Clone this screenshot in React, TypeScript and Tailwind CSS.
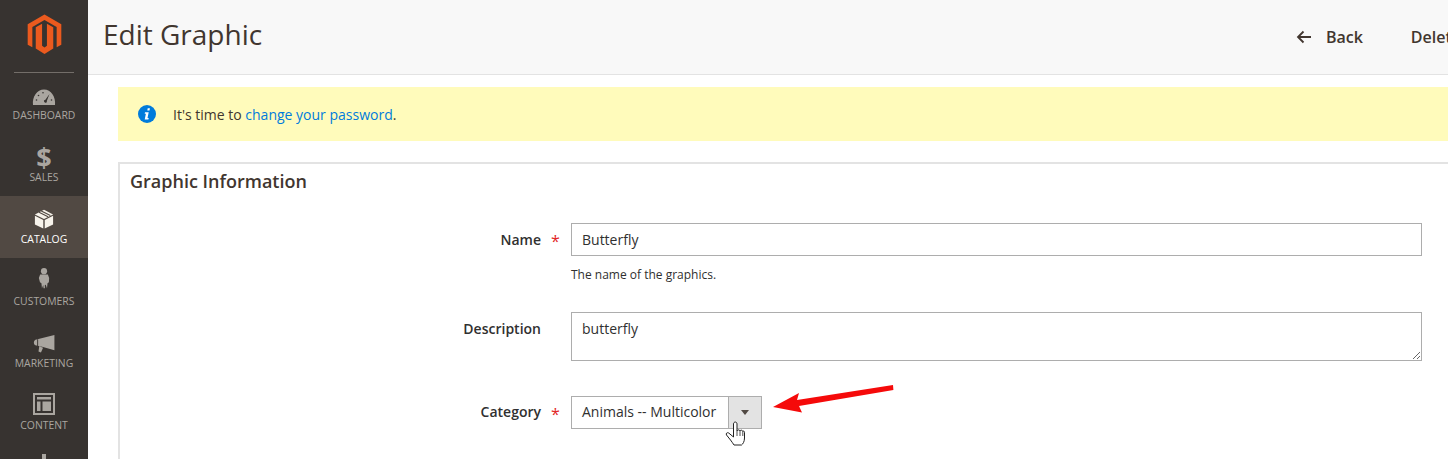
import React from "react";

const Gauge = () => (
  <svg width="24" height="16" viewBox="0 1 24 16" className="block">
    <path fill="#aaa6a0" fillRule="evenodd" d="M1 17C0 9 5 1.500 12 1.500S24 9 23 17H1Z M12.800 14.500c1 .8 2.500-.2 2-1.500L17.500 6l-4.300 6.100c-1.200-.2-2 .9-.4 2.400Z" />
    <g fill="#373330">
      <circle cx="4.500" cy="12" r=".8" /><circle cx="6.500" cy="7.500" r=".8" /><circle cx="11" cy="4.700" r=".8" />
      <circle cx="19.500" cy="12" r=".8" />
    </g>
  </svg>
);
const Box = () => (
  <svg width="20" height="20" viewBox="0 0 22 22" className="block">
    <path fill="#f7f3eb" d="M11 .8 21 6 11 11 1 6 11 .8ZM1 7.500l9.200 4.700v9.300L1 17V7.500Zm20 0v9.500l-9.200 4.500v-9.300L21 7.500Z" />
    <path stroke="#514943" strokeWidth="1.300" d="M5.500 3.500 15.500 8.500M8 2.200 18 7.200" />
  </svg>
);
const Person = () => (
  <svg width="12" height="24" viewBox="0 0 14 24" className="-translate-y-[1px] block">
    <circle cx="7" cy="4" r="3.600" fill="#aaa6a0" />
    <path fill="#aaa6a0" d="M2.500 8h9L13 12l-.3 5-1.600 1-.6 6-1.500-4-1 .2V24H6.500l-.4-3.800L4.600 24 4 18l-1.700-1L1 12l1.500-4Z" />
  </svg>
);
const Megaphone = () => (
  <svg width="22" height="18" viewBox="0 0 22 19" className="block">
    <path fill="#aaa6a0" d="M22 0v16L9 12.500 6.500 12 3 11.200C1.500 11 .3 10 .3 8s1.200-3 2.700-3.300L22 0Zm-12 13.500L7.800 18.500l-2.600-1L6 11.800l4 1.700Z" />
    <path fill="#373330" d="M3.800 4.500h1v7h-1z" />
  </svg>
);
const Layout = () => (
  <svg width="22" height="22" viewBox="0 0 22 22" className="block">
    <path fill="#aaa6a0" fillRule="evenodd" d="M0 0h22v22H0V0Zm2 2v18h18V2H2Zm2 2h14v2.500H4V4Zm0 4.500h3.500V18H4V8.500Zm5.500 0H18V18H9.500V8.500Z" />
  </svg>
);

const items: [string, React.ReactNode, boolean?][] = [
  ["DASHBOARD", <Gauge />],
  ["SALES", <span className="block h-[22px] translate-y-[1px] text-[27px] leading-[22px] font-bold text-[#aaa6a0]">$</span>],
  ["CATALOG", <Box />, true],
  ["CUSTOMERS", <Person />],
  ["MARKETING", <Megaphone />],
  ["CONTENT", <Layout />],
];

const labelCls = "w-[421px] text-right text-[14px] font-semibold text-[#303030] leading-[33px]";

export default function App() {
  return (
    <div className="flex h-[459px] w-[1448px] overflow-hidden bg-white font-['Open_Sans',sans-serif] text-[#303030]">
      <aside className="h-full w-[88px] shrink-0 overflow-hidden bg-[#373330]">
        <div className="flex h-[73px] flex-col items-center">
          <svg width="35" height="41" viewBox="0 0 36 41" className="mt-[14px]">
            <path fill="#eb5a1e" d="M18 0 35.300 10v21l-4.800 2.700V12.700L18 5.500 5.500 12.700v21L.700 31V10L18 0Z" />
            <path fill="#eb5a1e" d="M9 13l6.500-3.500V32l2.500 1.800 2.500-1.800V9.500L27 13v22L18 40.500 9 35V13Z" />
          </svg>
          <div className="mt-[17px] h-px w-[60px] bg-[#736e69]" />
        </div>
        <nav className="-mt-[1px]">
          {items.map(([label, icon, active]) => (
            <div key={label} className={`flex h-[62px] flex-col items-center ${active ? "bg-[#514943]" : ""}`}>
              <div className="mt-[9px] flex h-[24px] items-end justify-center">{icon}</div>
              <div className={`mt-[3px] text-[10.400px] leading-[14px] ${active ? "text-white" : "text-[#aaa6a0]"}`}>{label}</div>
            </div>
          ))}
          <div className="flex justify-center pt-[10px]">
            <div className="h-[8px] w-[4px] bg-[#aaa6a0]" />
          </div>
        </nav>
      </aside>

      <main className="relative min-w-0 flex-1">
        <header className="flex h-[75px] items-center border-b border-[#e3e3e3] bg-[#f8f8f8] pl-[15px]">
          <h1 className="-mt-[6px] text-[28px] leading-[36px] font-normal text-[#41362f]">Edit Graphic</h1>
          <div className="ml-auto -mr-[13px] flex items-center whitespace-nowrap text-[16px] font-semibold text-[#41362f]">
            <svg width="16" height="14" viewBox="0 0 16 14" className="mr-[14px]">
              <path fill="none" stroke="#41362f" strokeWidth="1.800" d="M15 7H2M7.500 1.500 2 7l5.500 5.500" />
            </svg>
            <span>Back</span>
            <span className="ml-[48px]">Delete</span>
          </div>
        </header>

        <div className="pl-[30px]">
          <div className="mt-[12px] flex h-[54px] items-center bg-[#fffbbb] pl-[20px] text-[14px] text-[#41362f]">
            <svg width="18" height="18" viewBox="0 0 18 18" className="mr-[17px]">
              <circle cx="9" cy="9" r="9" fill="#007bdb" />
              <path fill="#fff" d="M9.700 3.300h2.200l-.4 2.200H9.300l.4-2.200ZM7 7.200h3.700l-1.200 5.900h1.200l-.3 1.500H6.700l1.200-5.900H6.700L7 7.200Z" />
            </svg>
            <span>
              It's time to <span className="text-[#007bdb]">change your password</span>.
            </span>
          </div>

          <section className="mt-[21px] h-[320px] border-t-2 border-l-2 border-[#e3e3e3]">
            <h2 className="pl-[10px] pt-[5px] text-[18px] leading-[25px] font-semibold text-[#41362f]">Graphic Information</h2>
            <div className="pt-[29px] text-[14px]">
              <div className="relative flex">
                <div className={labelCls}>Name</div>
                <div className="ml-[30px] flex-1">
                  <div className="h-[33px] w-[851px] border border-[#adadad] px-[10px] leading-[31px] text-[#303030]">Butterfly</div>
                  <div className="mt-[11px] text-[12px] leading-[16px] text-[#303030]">The name of the graphics.</div>
                </div>
                <span className="absolute left-[431px] top-0 text-[16px] leading-[36px] text-[#e22626]">*</span>
              </div>
              <div className="relative mt-[29px] flex">
                <div className={labelCls}>Description</div>
                <div className="ml-[30px] flex-1">
                  <textarea readOnly defaultValue="butterfly" className="block h-[49px] w-[851px] border border-[#adadad] bg-white px-[10px] py-[6px] text-[14px] leading-[20px] text-[#303030] outline-none" />
                </div>
              </div>
              <div className="relative mt-[35px] flex">
                <div className="w-[421px] text-right text-[14px] leading-[31px] font-semibold text-[#303030]">Category</div>
                <div className="ml-[30px] flex h-[33px] w-[191px] border border-[#adadad]">
                  <div className="flex-1 whitespace-nowrap pl-[10px] leading-[29px] text-[#303030]">Animals -- Multicolor</div>
                  <div className="flex w-[33px] items-center justify-center border-l border-[#adadad] bg-[#e3e3e3]">
                    <div className="h-0 w-0 border-x-[4px] border-t-[5px] border-x-transparent border-t-[#514943]" />
                  </div>
                </div>
                <span className="absolute left-[431px] top-0 text-[16px] leading-[36px] text-[#e22626]">*</span>
              </div>
            </div>
          </section>
        </div>

        <svg width="130" height="32" viewBox="0 0 130 32" className="absolute left-[680px] top-[382px]">
          <path fill="#f50a0a" d="M5 25 31 11l-2 7 96-15 .4 5L31 24l3 6.500L5 25Z" />
        </svg>
        <svg width="21" height="26" viewBox="0 0 21 26" className="absolute left-[637px] top-[421px]">
          <path fill="#fff" stroke="#222" strokeWidth="1" strokeLinejoin="round" d="M8.500 3c0-2.600 3.500-2.600 3.500 0v7c.3-1.500 2.700-1.500 3 0 .3-1.200 2.500-1.200 2.800.5.300-.8 1.700-.6 1.700.8v5.700c0 3.500-1.500 6-3 7H9c-1-1.500-2-3-3.500-5L1.500 14c-1-1.500.8-3 2.200-2L8.500 16V3Z" />
          <path stroke="#222" strokeWidth=".8" d="M12 10v5M15 10v5M17.800 10.500v4.500" />
        </svg>
      </main>
    </div>
  );
}
